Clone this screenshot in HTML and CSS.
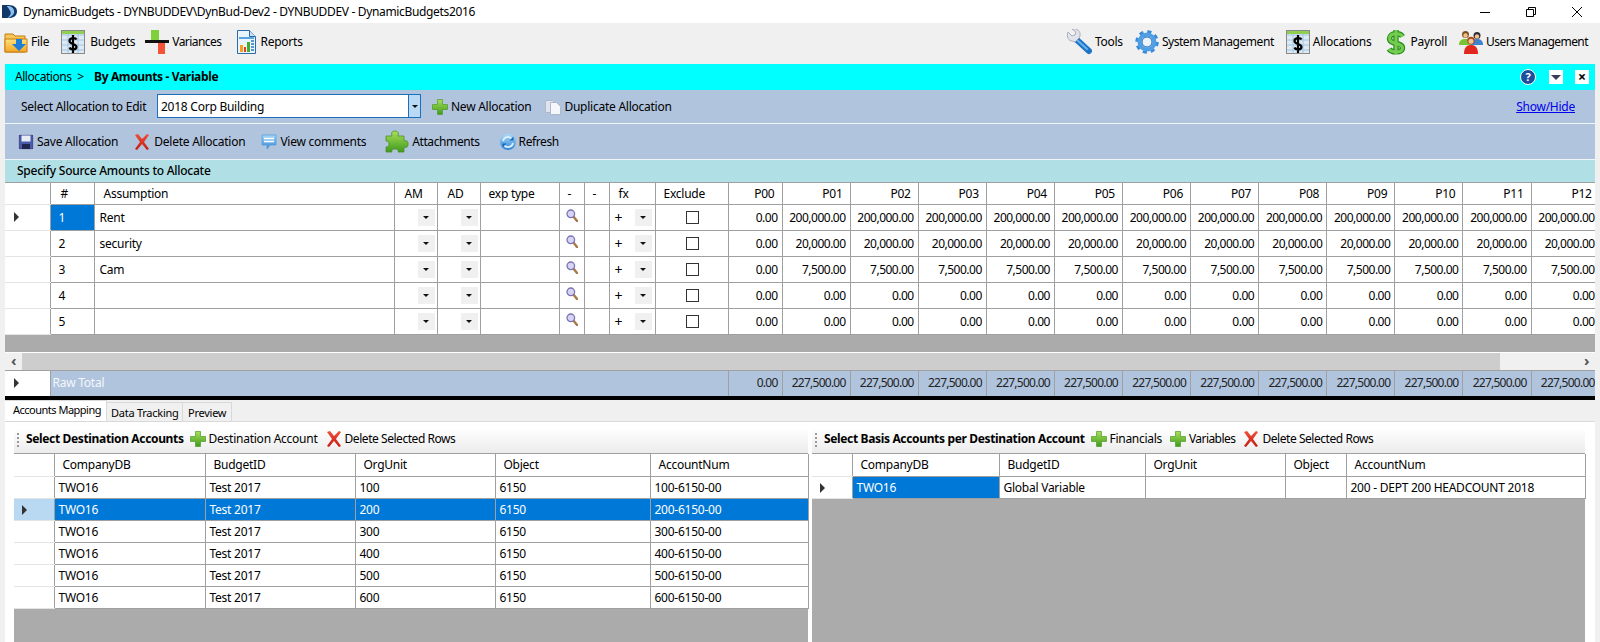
FILE: index.html
```html
<!DOCTYPE html>
<html lang="en">
<head>
<meta charset="utf-8">
<title>DynamicBudgets</title>
<link rel="stylesheet" href="styles.css">
</head>
<body>
<svg class="defs" width="0" height="0" aria-hidden="true">
  <defs>
    <linearGradient id="gGreen" x1="0" y1="0" x2="0" y2="1"><stop offset="0" stop-color="#a8e05a"/><stop offset="1" stop-color="#3f9a1c"/></linearGradient>
    <linearGradient id="gRed" x1="0" y1="0" x2="0" y2="1"><stop offset="0" stop-color="#f0503a"/><stop offset="1" stop-color="#c51a10"/></linearGradient>
    <linearGradient id="gFolder" x1="0" y1="0" x2="0" y2="1"><stop offset="0" stop-color="#ffe27a"/><stop offset="1" stop-color="#f5a623"/></linearGradient>
    <linearGradient id="gBlue" x1="0" y1="0" x2="0" y2="1"><stop offset="0" stop-color="#a9d8f7"/><stop offset="1" stop-color="#2f86d6"/></linearGradient>
    <symbol id="i-folder" viewBox="0 0 24 24"><path d="M1 4h8l2 2h10v16H1z" fill="#f7c654" stroke="#c27d12"/><path d="M1 9h22v13H1z" fill="url(#gFolder)" stroke="#c27d12"/><path d="M12 10h6v5h4l-7 7-7-7h4z" transform="translate(0 -1)" fill="#1f7fd6"/></symbol>
    <symbol id="i-sheet" viewBox="0 0 24 24"><rect x=".5" y=".5" width="23" height="23" fill="#dfe9f2" stroke="#8a8a8a"/><rect x="1" y="1" width="22" height="3" fill="#8fd14f"/><path d="M1 5h22M1 10h22M1 15h22M1 20h22M7 4v19M17 4v19" stroke="#9fc6e8" fill="none"/><path d="M15.5 9.5c-1-2-7-2-7 1.500 0 3.500 7 2.500 7 6 0 3-6 3-7 .5M12 5v18" stroke="#000" stroke-width="2.200" fill="none"/></symbol>
    <symbol id="i-var" viewBox="0 0 24 24"><rect x="6" y="0" width="8" height="11" fill="#7fd13b"/><rect x="13" y="13" width="7" height="11" fill="#f4533a"/><rect x="0" y="10" width="24" height="3" fill="#111"/></symbol>
    <symbol id="i-report" viewBox="0 0 19 24"><path d="M.5.500h12l6 6v17H.5z" fill="#eaf4fc" stroke="#2d6aa8"/><path d="M12.500.500v6h6" fill="#c9e0f3" stroke="#2d6aa8"/><rect x="2" y="7" width="15" height="2" fill="#59a4e0"/><rect x="3" y="15" width="3" height="7" fill="#f7a11a"/><rect x="7" y="17" width="2" height="5" fill="#e23c2a"/><rect x="10" y="12" width="3" height="10" fill="#46ad2d"/><path d="M14 11h3M14 14h3M14 17h3M14 20h3" stroke="#2d78c4" stroke-width="1.500"/></symbol>
    <symbol id="i-wrench" viewBox="0 0 26 26"><path d="M11 11 23 22" stroke="#1f74c4" stroke-width="6" stroke-linecap="round"/><path d="M11 11 21 20" stroke="#63b3ee" stroke-width="2" stroke-linecap="round"/><path d="M2 3 6 7l3-1 1-3-4-3c5-1 9 2 8 7l-1 2-4 4-3-1C3 12 0 8 2 3z" fill="#e2e4ec" stroke="#9a9fb0" stroke-width=".8"/></symbol>
    <symbol id="i-gear" viewBox="0 0 24 24"><circle cx="12" cy="12" r="9.500" fill="none" stroke="#3a8ad6" stroke-width="4.500" stroke-dasharray="3.800 3.660"/><circle cx="12" cy="12" r="7.500" fill="none" stroke="#4f9fe6" stroke-width="4"/><circle cx="12" cy="12" r="5" fill="#eef4fb" stroke="#1f6cb8"/></symbol>
    <symbol id="i-dollar" viewBox="0 0 20 26"><path d="M16.500 7.500c-2-4-13-4-13 2 0 6.500 13 3.500 13 9.500 0 5-11 5-13.500 1M10 1v24" stroke="#2f8f24" stroke-width="5.400" fill="none"/><path d="M16.500 7.500c-2-4-13-4-13 2 0 6.500 13 3.500 13 9.500 0 5-11 5-13.500 1M10 1v24" stroke="#74cd4e" stroke-width="3" fill="none"/></symbol>
    <symbol id="i-users" viewBox="0 0 24 24"><circle cx="6.500" cy="4.500" r="3.500" fill="#7a5420"/><circle cx="6.500" cy="5.500" r="2.200" fill="#f3c08a"/><path d="M0 15c0-5 3-6 6.500-6s6 2 6 6z" fill="#7cc236"/><circle cx="18" cy="5.500" r="3.500" fill="#2d2d3a"/><circle cx="18" cy="6.500" r="2.200" fill="#f3c08a"/><path d="M12 15c0-5 3-6 6-6s6 1 6 6z" fill="#3f83cf"/><circle cx="12" cy="10.500" r="3.700" fill="#a8481a"/><circle cx="12" cy="11.300" r="2.500" fill="#f7c79a"/><path d="M5 24c0-7 3-9 7-9s7 2 7 9z" fill="#e3271f"/></symbol>
    <symbol id="i-plus" viewBox="0 0 16 16"><path d="M5.500.5h5v5h5v5h-5v5h-5v-5h-5v-5h5z" fill="url(#gGreen)" stroke="#4d9b26" stroke-width=".7"/></symbol>
    <symbol id="i-x" viewBox="0 0 16 16"><path d="M1 1l3-1 4 5 5-5 2 1-5 7 5 7-2 1-5-6-5 6-2-1 5-7z" fill="url(#gRed)"/></symbol>
    <symbol id="i-dup" viewBox="0 0 16 16"><path d="M.5 1.500h7l2 2v10h-9z" fill="#dfe5ef" stroke="#aeb8c8"/><path d="M5.500 3.500h6l4 4v8h-10z" fill="#f5f7fb" stroke="#aeb8c8"/></symbol>
    <symbol id="i-save" viewBox="0 0 16 16"><rect x="0" y="0" width="16" height="16" fill="#dde3f0"/><rect x="1" y="1" width="14" height="14" fill="#4a5aa8" stroke="#323e80" stroke-width=".6"/><rect x="3.500" y="1.500" width="9" height="6" fill="#e8ecf6"/><rect x="4" y="10" width="8" height="5" fill="#20264f"/></symbol>
    <symbol id="i-comment" viewBox="0 0 16 16"><path d="M1 1h14v10H9l-3 4v-4H1z" fill="url(#gBlue)" stroke="#4e9ad8" stroke-width=".7"/><path d="M3 4.500h10M3 7.500h10" stroke="#fff" stroke-width="1.400"/></symbol>
    <symbol id="i-puzzle" viewBox="0 0 24 24"><path d="M2 6h6c-1-3 0-5 3-5s4 2 3 5h6v5c3-1 4 0 4 3s-1 4-4 3v5h-6c1-2-1-3-3-3s-4 1-3 3H2v-5c2 0 3-1 3-3s-1-3-3-3z" transform="translate(-1 0)" fill="url(#gGreen)" stroke="#4f8f2a" stroke-width=".8"/></symbol>
    <symbol id="i-refresh" viewBox="0 0 16 16"><circle cx="8" cy="8" r="8" fill="url(#gBlue)"/><path d="M3 7a5 5 0 0 1 9-2M13 9a5 5 0 0 1-9 2" stroke="#dff0fc" stroke-width="1.800" fill="none"/><path d="M13.500 2.500v4h-4zM2.500 13.500v-4h4z" fill="#1668b8"/></symbol>
    <symbol id="i-mag" viewBox="0 0 12 13"><path d="M7 7l4 5" stroke="#a9794a" stroke-width="2.400" stroke-linecap="round"/><circle cx="4.800" cy="4.800" r="3.800" fill="#d7d4f4" stroke="#7a74b5" stroke-width="1.300"/></symbol>
  </defs>
</svg>

<header class="titlebar">
  <svg class="logo" viewBox="0 0 16 16"><path d="M0 1h7c6 0 9 3 9 7s-3 7-9 7H0z" fill="#12386b"/><path d="M5 2c5 0 8 2 8 6s-4 6-7 7c3-3 4-5 3-7S7 4 5 2z" fill="#8cc0ea"/></svg>
  <span class="title-text">DynamicBudgets - DYNBUDDEV\DynBud-Dev2 - DYNBUDDEV - DynamicBudgets2016</span>
  <div class="win-controls">
    <svg class="win-btn" viewBox="0 0 12 12"><path d="M1 6.500h10" stroke="#000"/></svg>
    <svg class="win-btn" viewBox="0 0 12 12"><path d="M3.500 3V1.500h7v7H9M1.500 3.500h7v7h-7z" stroke="#000" fill="none"/></svg>
    <svg class="win-btn" viewBox="0 0 12 12"><path d="M1 1l10 10M11 1 1 11" stroke="#000"/></svg>
  </div>
</header>

<nav class="menubar">
  <a class="tool t-file"><svg class="ic24"><use href="#i-folder"/></svg>File</a>
  <a class="tool t-budgets"><svg class="ic24"><use href="#i-sheet"/></svg>Budgets</a>
  <a class="tool t-var"><svg class="ic24"><use href="#i-var"/></svg>Variances</a>
  <a class="tool t-rep"><svg class="ic19"><use href="#i-report"/></svg>Reports</a>
  <a class="tool t-tools"><svg class="ic26"><use href="#i-wrench"/></svg>Tools</a>
  <a class="tool t-sys"><svg class="ic24"><use href="#i-gear"/></svg>System Management</a>
  <a class="tool t-alloc"><svg class="ic24"><use href="#i-sheet"/></svg>Allocations</a>
  <a class="tool t-pay"><svg class="ic20"><use href="#i-dollar"/></svg>Payroll</a>
  <a class="tool t-users"><svg class="ic24"><use href="#i-users"/></svg>Users Management</a>
</nav>

<main class="content">
  <div class="crumb">
    <span class="crumb-a">Allocations &gt;</span>
    <strong class="crumb-b">By Amounts - Variable</strong>
    <span class="crumb-help">?</span>
    <span class="crumb-box"><i class="tri-down"></i></span>
    <span class="crumb-box crumb-close">×</span>
  </div>

  <div class="bar select-bar">
    <span class="sel-label">Select Allocation to Edit</span>
    <div class="combo"><span class="combo-text">2018 Corp Building</span><span class="combo-btn"><i class="tri-mini"></i></span></div>
    <a class="tool t-new"><svg class="ic16"><use href="#i-plus"/></svg>New Allocation</a>
    <a class="tool t-dup"><svg class="ic16"><use href="#i-dup"/></svg>Duplicate Allocation</a>
    <a class="showhide">Show/Hide</a>
  </div>

  <div class="bar action-bar">
    <a class="tool t-save"><svg class="ic16"><use href="#i-save"/></svg>Save Allocation</a>
    <a class="tool t-del"><svg class="ic16"><use href="#i-x"/></svg>Delete Allocation</a>
    <a class="tool t-view"><svg class="ic16"><use href="#i-comment"/></svg>View comments</a>
    <a class="tool t-att"><svg class="ic24"><use href="#i-puzzle"/></svg>Attachments</a>
    <a class="tool t-ref"><svg class="ic16"><use href="#i-refresh"/></svg>Refresh</a>
  </div>

  <div class="section-head">Specify Source Amounts to Allocate</div>

  <div class="src-grid">
    <table class="grid src">
      <colgroup><col class="w-rh"><col class="w-num"><col class="w-as"><col class="w-am"><col class="w-am"><col class="w-ex"><col class="w-d"><col class="w-d"><col class="w-fx"><col class="w-inc"><col class="w-p0"><col class="w-p"><col class="w-p"><col class="w-p"><col class="w-p"><col class="w-p"><col class="w-p"><col class="w-p"><col class="w-p"><col class="w-p"><col class="w-p"><col class="w-p"><col class="w-p"></colgroup>
      <thead><tr><th class="rh"></th><th class="ctr-l">#</th><th class="nudge">Assumption</th><th>AM</th><th>AD</th><th class="nudge2">exp type</th><th class="dash">-</th><th class="dash">-</th><th class="nudge">fx</th><th class="nudge2">Exclude</th><th class="num">P00</th><th class="num">P01</th><th class="num">P02</th><th class="num">P03</th><th class="num">P04</th><th class="num">P05</th><th class="num">P06</th><th class="num">P07</th><th class="num">P08</th><th class="num">P09</th><th class="num">P10</th><th class="num">P11</th><th class="num">P12</th></tr></thead>
      <tbody>
        <tr><td class="rh"><i class="arrow"></i></td><td class="sel id">1</td><td>Rent</td><td class="dd"><i class="ddb"><i class="tri-mini"></i></i></td><td class="dd"><i class="ddb"><i class="tri-mini"></i></i></td><td></td><td class="mag"><svg class="ic-mag"><use href="#i-mag"/></svg></td><td></td><td class="fx">+<i class="ddb"><i class="tri-mini"></i></i></td><td class="chk"><i class="box"></i></td><td class="num">0.00</td><td class="num">200,000.00</td><td class="num">200,000.00</td><td class="num">200,000.00</td><td class="num">200,000.00</td><td class="num">200,000.00</td><td class="num">200,000.00</td><td class="num">200,000.00</td><td class="num">200,000.00</td><td class="num">200,000.00</td><td class="num">200,000.00</td><td class="num">200,000.00</td><td class="num">200,000.00</td></tr>
        <tr><td class="rh"></td><td class="id">2</td><td>security</td><td class="dd"><i class="ddb"><i class="tri-mini"></i></i></td><td class="dd"><i class="ddb"><i class="tri-mini"></i></i></td><td></td><td class="mag"><svg class="ic-mag"><use href="#i-mag"/></svg></td><td></td><td class="fx">+<i class="ddb"><i class="tri-mini"></i></i></td><td class="chk"><i class="box"></i></td><td class="num">0.00</td><td class="num">20,000.00</td><td class="num">20,000.00</td><td class="num">20,000.00</td><td class="num">20,000.00</td><td class="num">20,000.00</td><td class="num">20,000.00</td><td class="num">20,000.00</td><td class="num">20,000.00</td><td class="num">20,000.00</td><td class="num">20,000.00</td><td class="num">20,000.00</td><td class="num">20,000.00</td></tr>
        <tr><td class="rh"></td><td class="id">3</td><td>Cam</td><td class="dd"><i class="ddb"><i class="tri-mini"></i></i></td><td class="dd"><i class="ddb"><i class="tri-mini"></i></i></td><td></td><td class="mag"><svg class="ic-mag"><use href="#i-mag"/></svg></td><td></td><td class="fx">+<i class="ddb"><i class="tri-mini"></i></i></td><td class="chk"><i class="box"></i></td><td class="num">0.00</td><td class="num">7,500.00</td><td class="num">7,500.00</td><td class="num">7,500.00</td><td class="num">7,500.00</td><td class="num">7,500.00</td><td class="num">7,500.00</td><td class="num">7,500.00</td><td class="num">7,500.00</td><td class="num">7,500.00</td><td class="num">7,500.00</td><td class="num">7,500.00</td><td class="num">7,500.00</td></tr>
        <tr><td class="rh"></td><td class="id">4</td><td></td><td class="dd"><i class="ddb"><i class="tri-mini"></i></i></td><td class="dd"><i class="ddb"><i class="tri-mini"></i></i></td><td></td><td class="mag"><svg class="ic-mag"><use href="#i-mag"/></svg></td><td></td><td class="fx">+<i class="ddb"><i class="tri-mini"></i></i></td><td class="chk"><i class="box"></i></td><td class="num">0.00</td><td class="num">0.00</td><td class="num">0.00</td><td class="num">0.00</td><td class="num">0.00</td><td class="num">0.00</td><td class="num">0.00</td><td class="num">0.00</td><td class="num">0.00</td><td class="num">0.00</td><td class="num">0.00</td><td class="num">0.00</td><td class="num">0.00</td></tr>
        <tr><td class="rh"></td><td class="id">5</td><td></td><td class="dd"><i class="ddb"><i class="tri-mini"></i></i></td><td class="dd"><i class="ddb"><i class="tri-mini"></i></i></td><td></td><td class="mag"><svg class="ic-mag"><use href="#i-mag"/></svg></td><td></td><td class="fx">+<i class="ddb"><i class="tri-mini"></i></i></td><td class="chk"><i class="box"></i></td><td class="num">0.00</td><td class="num">0.00</td><td class="num">0.00</td><td class="num">0.00</td><td class="num">0.00</td><td class="num">0.00</td><td class="num">0.00</td><td class="num">0.00</td><td class="num">0.00</td><td class="num">0.00</td><td class="num">0.00</td><td class="num">0.00</td><td class="num">0.00</td></tr>
      </tbody>
    </table>
    <div class="src-fill"></div>
  </div>

  <div class="hscroll">
    <span class="sb-btn">‹</span><span class="sb-thumb"></span><span class="sb-btn sb-end">›</span>
  </div>

  <div class="total-grid">
    <table class="grid total">
      <colgroup><col class="w-rh"><col class="w-total"><col class="w-p0"><col class="w-p"><col class="w-p"><col class="w-p"><col class="w-p"><col class="w-p"><col class="w-p"><col class="w-p"><col class="w-p"><col class="w-p"><col class="w-p"><col class="w-p"><col class="w-p"></colgroup>
      <tbody><tr><td class="rh"><i class="arrow"></i></td><td class="raw">Raw Total</td><td class="num">0.00</td><td class="num">227,500.00</td><td class="num">227,500.00</td><td class="num">227,500.00</td><td class="num">227,500.00</td><td class="num">227,500.00</td><td class="num">227,500.00</td><td class="num">227,500.00</td><td class="num">227,500.00</td><td class="num">227,500.00</td><td class="num">227,500.00</td><td class="num">227,500.00</td><td class="num">227,500.00</td></tr></tbody>
    </table>
  </div>

  <div class="tabs">
    <span class="tab active">Accounts Mapping</span>
    <span class="tab t2">Data Tracking</span>
    <span class="tab t3">Preview</span>
  </div>

  <section class="tabpanel">
    <div class="pane pane-l">
      <div class="pane-bar">
        <i class="grip"></i>
        <strong class="pane-title pt-l">Select Destination Accounts</strong>
        <a class="tool t-dest"><svg class="ic16"><use href="#i-plus"/></svg>Destination Account</a>
        <a class="tool t-dsr"><svg class="ic16"><use href="#i-x"/></svg>Delete Selected Rows</a>
      </div>
      <div class="pane-grid">
        <table class="grid small left">
          <colgroup><col class="l-rh"><col class="l-1"><col class="l-2"><col class="l-3"><col class="l-4"><col class="l-5"></colgroup>
          <thead><tr><th class="rh"></th><th>CompanyDB</th><th>BudgetID</th><th>OrgUnit</th><th>Object</th><th>AccountNum</th></tr></thead>
          <tbody>
            <tr><td class="rh"></td><td>TWO16</td><td>Test 2017</td><td>100</td><td>6150</td><td>100-6150-00</td></tr>
            <tr class="selrow"><td class="rh"><i class="arrow"></i></td><td>TWO16</td><td>Test 2017</td><td>200</td><td>6150</td><td>200-6150-00</td></tr>
            <tr><td class="rh"></td><td>TWO16</td><td>Test 2017</td><td>300</td><td>6150</td><td>300-6150-00</td></tr>
            <tr><td class="rh"></td><td>TWO16</td><td>Test 2017</td><td>400</td><td>6150</td><td>400-6150-00</td></tr>
            <tr><td class="rh"></td><td>TWO16</td><td>Test 2017</td><td>500</td><td>6150</td><td>500-6150-00</td></tr>
            <tr><td class="rh"></td><td>TWO16</td><td>Test 2017</td><td>600</td><td>6150</td><td>600-6150-00</td></tr>
          </tbody>
        </table>
      </div>
    </div>
    <div class="pane pane-r">
      <div class="pane-bar">
        <i class="grip"></i>
        <strong class="pane-title pt-r">Select Basis Accounts per Destination Account</strong>
        <a class="tool t-fin"><svg class="ic16"><use href="#i-plus"/></svg>Financials</a>
        <a class="tool t-vars"><svg class="ic16"><use href="#i-plus"/></svg>Variables</a>
        <a class="tool t-dsr"><svg class="ic16"><use href="#i-x"/></svg>Delete Selected Rows</a>
      </div>
      <div class="pane-grid">
        <table class="grid small right">
          <colgroup><col class="r-rh"><col class="r-1"><col class="r-2"><col class="r-3"><col class="r-4"><col class="r-5"></colgroup>
          <thead><tr><th class="rh"></th><th>CompanyDB</th><th>BudgetID</th><th>OrgUnit</th><th>Object</th><th>AccountNum</th></tr></thead>
          <tbody>
            <tr><td class="rh"><i class="arrow"></i></td><td class="sel">TWO16</td><td>Global Variable</td><td></td><td></td><td>200 - DEPT 200 HEADCOUNT 2018</td></tr>
          </tbody>
        </table>
      </div>
    </div>
  </section>
</main>
</body>
</html>
```

FILE: styles.css
```css
* { box-sizing: border-box; }
html, body { margin: 0; padding: 0; }
body {
  width: 1600px; height: 642px; overflow: hidden;
  background: #f0f0f0; color: #000;
  font: 12px/16px "Noto Sans", Tahoma, sans-serif;
  letter-spacing: -.25px;
}
.defs { position: absolute; }
svg { display: block; flex: none; }
i { display: block; font-style: normal; }

.titlebar { height: 23px; background: #fff; display: flex; align-items: center; padding-left: 2px; }
.logo { width: 15px; height: 15px; }
.title-text { margin-left: 6px; font-size: 12px; letter-spacing: -.34px; }
.win-controls { margin-left: auto; display: flex; gap: 34px; padding-right: 17px; }
.win-btn { width: 12px; height: 12px; }

.menubar { height: 41px; display: flex; align-items: center; padding-left: 4px; padding-bottom: 4px; }
.tool { display: flex; align-items: center; gap: 3px; white-space: nowrap; }
.ic24 { width: 24px; height: 24px; }
.ic26 { width: 26px; height: 26px; }
.ic20 { width: 20px; height: 26px; }
.ic19 { width: 19px; height: 24px; }
.ic16 { width: 16px; height: 16px; }
.t-budgets { margin-left: 12px; gap: 5px; }
.t-var { margin-left: 10px; letter-spacing: -.55px; }
.t-rep { margin-left: 15px; gap: 5px; }
.t-tools { margin-left: auto; }
.t-sys { margin-left: 12px; letter-spacing: -.45px; }
.t-alloc { margin-left: 12px; }
.t-pay { margin-left: 14px; gap: 5px; }
.t-users { margin-left: 12px; margin-right: 12px; letter-spacing: -.55px; }

.content { margin: 0 5px; }
.crumb { height: 26px; background: #0ff; display: flex; align-items: center; padding-left: 10px; padding-right: 6px; }
.crumb-a { width: 79px; letter-spacing: -.45px; word-spacing: 3px; }
.crumb-b { letter-spacing: -.35px; }
.crumb-help {
  margin-left: auto; width: 16px; height: 16px; border-radius: 50%;
  background: #1d4f9c; border: 1px solid #fff; color: #fff;
  font: bold 11px/14px "Noto Sans", sans-serif; text-align: center;
}
.crumb-box { width: 14px; height: 14px; background: #fff; margin-left: 13px; display: flex; align-items: center; justify-content: center; }
.crumb-close { font: bold 14px/14px "Noto Sans", sans-serif; margin-left: 12px; }
.tri-down { width: 0; height: 0; border: 5px solid transparent; border-top: 5px solid #3a3a5a; border-bottom: 0; }
.tri-mini { width: 0; height: 0; border: 3px solid transparent; border-top: 3px solid #111; border-bottom: 0; }

.bar { background: #b0c4de; display: flex; align-items: center; }
.select-bar { height: 34px; padding-left: 16px; border-bottom: 1px solid #f2f6fb; padding-bottom: 1px; }
.sel-label { width: 136px; padding-top: 1px; }
.combo { width: 264px; height: 24px; border: 1px solid #1a6fc0; background: #fff; display: flex; align-items: stretch; }
.combo-text { flex: 1; padding: 4px 0 0 3px; }
.combo-btn { width: 12px; background: #b9d9f4; border-left: 1px solid #1a6fc0; display: flex; align-items: center; justify-content: center; }
.t-new { margin-left: 11px; padding-top: 1px; }
.t-dup { margin-left: 14px; padding-top: 1px; }
.showhide { margin-left: auto; margin-right: 20px; padding-top: 1px; color: #00e; text-decoration: underline; }
.action-bar { height: 36px; padding-left: 13px; border-bottom: 1px solid #f2f6fb; }
.t-del { margin-left: 16px; gap: 4px; }
.t-view { margin-left: 16px; }
.t-att { margin-left: 19px; gap: 3px; letter-spacing: -.4px; }
.t-ref { margin-left: 20px; letter-spacing: -.4px; }

.section-head { height: 23px; background: #b0e0e6; padding: 3px 0 0 12px; font-weight: 500; border-bottom: 1px solid #a0a0a0; }

.src-grid, .total-grid { overflow: hidden; }
.grid { border-collapse: collapse; table-layout: fixed; background: #fff; }
.grid th, .grid td { padding: 0 6px; border-right: 1px solid #a0a0a0; border-bottom: 1px solid #a0a0a0; overflow: hidden; white-space: nowrap; font-weight: 400; text-align: left; }
.src { width: 1590.200px; }
.src th { height: 21px; padding: 2px 0 0 10px; }
.src td { height: 26px; padding: 2px 0 0 5px; }
.src td.id { padding-left: 8px; }
.src th.nudge { padding-left: 9px; }
.src th.nudge2 { padding-left: 8px; }
.grid td.num, .grid th.num { text-align: right; padding-left: 0; }
.src td.num { padding-right: 4px; letter-spacing: -.5px; }
.total td.num { padding-right: 4px; letter-spacing: -.75px; }
.src th.num { padding-right: 7px; }
.src th.dash { padding-left: 8px; }
.w-rh { width: 45px; } .w-num { width: 44px; } .w-as { width: 300px; } .w-am { width: 43px; }
.w-ex { width: 79px; } .w-d { width: 25px; } .w-fx { width: 46px; } .w-inc { width: 73px; }
.w-p0 { width: 54px; } .w-p { width: 68.100px; } .w-total { width: 678px; }
.grid .rh { padding: 0 0 0 9px; border-bottom-color: #e4e4e4; background: #fff; }
.arrow { width: 0; height: 0; border: 5px solid transparent; border-left: 5px solid #333; border-right: 0; }
.grid .sel { background: #0078d7; color: #fff; }
.grid td.dd { padding: 0; }
.ddb { width: 17px; height: 17px; background: #f0f0f0; display: flex; align-items: center; justify-content: center; }
.dd .ddb { margin-left: 23px; }
.grid td.mag { padding: 4px 0 0 6px; vertical-align: top; }
.ic-mag { width: 12px; height: 13px; }
.grid td.fx { padding: 2px 0 0 5px; }
.fx { position: relative; font-size: 14px; }
.fx .ddb { position: absolute; top: 4px; left: 25px; }
.grid td.chk { padding: 0 0 0 30px; }
.box { width: 13px; height: 13px; border: 1px solid #333; background: #fff; }
.src-fill { height: 18px; background: #ababab; border-bottom: 1px solid #fff; }

.hscroll { height: 17px; display: flex; background: #f0f0f0; }
.sb-btn { width: 17px; text-align: center; font: bold 15px/15px "Noto Sans", sans-serif; color: #555; }
.sb-thumb { width: 1478px; background: #cdcdcd; }
.sb-end { margin-left: auto; }

.total-grid { border-top: 1px solid #a0a0a0; border-bottom: 4px solid #000; }
.total { width: 1590.200px; background: #b0c4de; }
.total td { height: 25px; border-bottom: 0; }
.total td.num { color: #222; }
.total td.raw { color: #f4f7fb; padding-left: 2px; }

.tabs { height: 21px; display: flex; align-items: flex-end; white-space: nowrap; font-size: 11px; }
.tab { height: 19px; padding: 2px 0 0 4px; border: 1px solid #d9d9d9; border-bottom: 0; border-left: 0; }
.tab.active { height: 21px; width: 102px; background: #fff; padding: 1px 0 0 8px; letter-spacing: -.5px; }
.t2 { width: 76px; }
.t3 { width: 49px; padding-left: 5px; }

.tabpanel { height: 222px; background: #fff; border-top: 1px solid #d9d9d9; padding: 6px 7px 0 9px; display: flex; gap: 4px; }
.pane { display: flex; flex-direction: column; height: 216px; }
.pane-l { width: 794px; }
.pane-r { width: 773px; }
.pane-bar { height: 25px; flex: none; display: flex; align-items: center; padding: 0 0 3px 12px; background: linear-gradient(#fff, #ececec); position: relative; }
.pane-title { letter-spacing: -.35px; }
.grip { position: absolute; left: 3px; top: 5px; width: 2px; height: 14px; background: repeating-linear-gradient(#999 0 2px, transparent 2px 4px); }
.t-dest { margin-left: 6px; }
.t-dsr { margin-left: 8px; letter-spacing: -.45px; }
.t-fin { margin-left: 6px; letter-spacing: -.3px; }
.t-vars { margin-left: 8px; letter-spacing: -.55px; }
.pane-grid { flex: 1; background: #ababab; border-top: 1px solid #a0a0a0; }
.small { width: 100%; }
.small th { height: 23px; padding-left: 8px; }
.small td { height: 22px; padding-left: 4px; }
.grid.small .rh { padding-left: 8px; }
.selrow td { background: #0078d7; color: #fff; }
.grid .selrow .rh { background: #b9d9f2; }
.l-rh { width: 40px; } .l-1 { width: 151px; } .l-2 { width: 150px; } .l-3 { width: 140px; } .l-4 { width: 155px; } .l-5 { width: 158px; }
.r-rh { width: 40px; } .r-1 { width: 147px; } .r-2 { width: 146px; } .r-3 { width: 140px; } .r-4 { width: 61px; } .r-5 { width: 239px; }
```
